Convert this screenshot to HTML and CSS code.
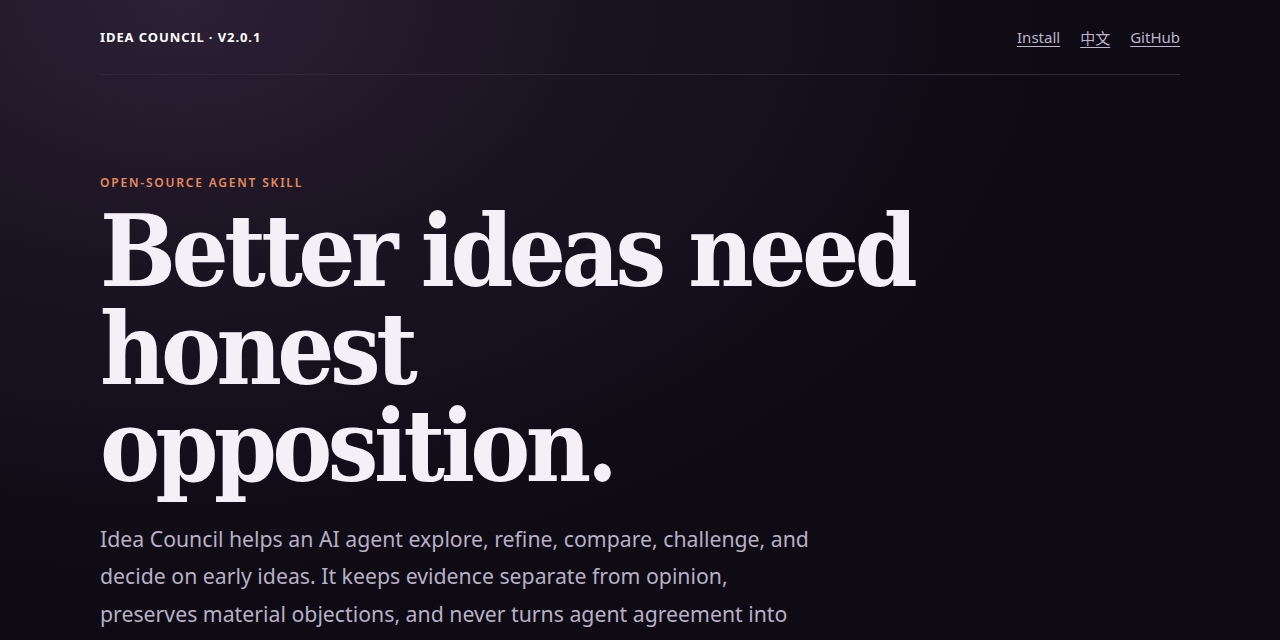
FILE: index.html
```html
<!DOCTYPE html>
<html lang="en">
<head>
<meta charset="utf-8">
<title>Idea Council</title>
<link rel="stylesheet" href="styles.css">
</head>
<body>
<div class="page">
  <header class="nav">
    <div class="brand">IDEA COUNCIL · V2.0.1</div>
    <nav class="links">
      <a href="#">Install</a>
      <a href="#" lang="zh">中文</a>
      <a href="#">GitHub</a>
    </nav>
  </header>
  <section class="hero">
    <div class="eyebrow">OPEN-SOURCE AGENT SKILL</div>
    <h1 class="title">Better ideas need honest opposition.</h1>
    <p class="lead">Idea Council helps an AI agent explore, refine, compare, challenge, and decide on early ideas. It keeps evidence separate from opinion, preserves material objections, and never turns agent agreement into proof.</p>
  </section>
</div>
</body>
</html>
```

FILE: styles.css
```css
html, body {
  margin: 0;
  padding: 0;
}
body {
  min-height: 100vh;
  background-color: #0e0b14;
  background-image: radial-gradient(ellipse 900px 600px at 180px 0px, #2c2035 0%, #1a1422 45%, #0e0b14 100%);
  color: #f4eff7;
  font-family: "Noto Sans", "Open Sans", sans-serif;
}
.page {
  width: 1080px;
  margin: 0 auto;
}
.nav {
  display: flex;
  justify-content: space-between;
  align-items: center;
  height: 74px;
  border-bottom: 1px solid #2f2838;
}
.brand {
  font-size: 13px;
  font-weight: 700;
  letter-spacing: 0.07em;
  color: #ffffff;
}
.links {
  display: flex;
  gap: 20px;
}
.links a {
  color: #bfb4cc;
  font-size: 15px;
  text-decoration: underline;
  text-underline-offset: 3px;
}
.links a[lang="zh"] {
  font-family: "Noto Sans CJK SC", sans-serif;
}
.hero {
  padding-top: 99px;
}
.eyebrow {
  font-size: 12px;
  font-weight: 600;
  letter-spacing: 0.15em;
  color: #e98a5c;
}
.title {
  margin: 12px 0 0;
  font-family: "DejaVu Serif", serif;
  font-stretch: condensed;
  font-weight: 700;
  font-size: 100px;
  line-height: 0.975;
  letter-spacing: -0.045em;
  color: #f5eff7;
  max-width: 835px;
}
.lead {
  margin: 24px 0 0;
  max-width: 720px;
  font-size: 21.25px;
  line-height: 1.765;
  color: #b8b0c6;
}
```
